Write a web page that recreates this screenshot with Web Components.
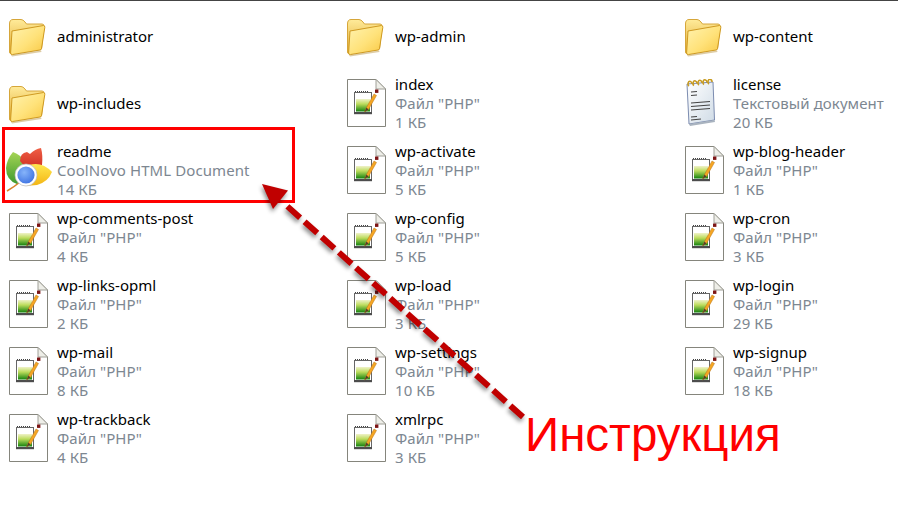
<!DOCTYPE html>
<html lang="ru">
<head>
<meta charset="utf-8">
<title>Инструкция</title>
<style>
    html, body { margin: 0; background: #fff; }
    body { width: 898px; height: 515px; overflow: hidden; position: relative; font-family: "Noto Sans", sans-serif; }
</style>
</head>
<body>
<file-grid>
    <file-tile icon="folder" name="administrator"></file-tile>
    <file-tile icon="folder" name="wp-admin"></file-tile>
    <file-tile icon="folder" name="wp-content"></file-tile>

    <file-tile icon="folder" name="wp-includes"></file-tile>
    <file-tile icon="php" name="index" type='Файл "PHP"' size="1 КБ"></file-tile>
    <file-tile icon="note" name="license" type="Текстовый документ" size="20 КБ"></file-tile>

    <file-tile icon="leaf" name="readme" type="CoolNovo HTML Document" size="14 КБ"></file-tile>
    <file-tile icon="php" name="wp-activate" type='Файл "PHP"' size="5 КБ"></file-tile>
    <file-tile icon="php" name="wp-blog-header" type='Файл "PHP"' size="1 КБ"></file-tile>

    <file-tile icon="php" name="wp-comments-post" type='Файл "PHP"' size="4 КБ"></file-tile>
    <file-tile icon="php" name="wp-config" type='Файл "PHP"' size="5 КБ"></file-tile>
    <file-tile icon="php" name="wp-cron" type='Файл "PHP"' size="3 КБ"></file-tile>

    <file-tile icon="php" name="wp-links-opml" type='Файл "PHP"' size="2 КБ"></file-tile>
    <file-tile icon="php" name="wp-load" type='Файл "PHP"' size="3 КБ"></file-tile>
    <file-tile icon="php" name="wp-login" type='Файл "PHP"' size="29 КБ"></file-tile>

    <file-tile icon="php" name="wp-mail" type='Файл "PHP"' size="8 КБ"></file-tile>
    <file-tile icon="php" name="wp-settings" type='Файл "PHP"' size="10 КБ"></file-tile>
    <file-tile icon="php" name="wp-signup" type='Файл "PHP"' size="18 КБ"></file-tile>

    <file-tile icon="php" name="wp-trackback" type='Файл "PHP"' size="4 КБ"></file-tile>
    <file-tile icon="php" name="xmlrpc" type='Файл "PHP"' size="3 КБ"></file-tile>
</file-grid>
<arrow-callout>Инструкция</arrow-callout>

<script>
const icons = {
    folder: `
        <svg width="48" height="48" viewBox="0 0 48 48">
            <defs>
                <linearGradient id="fb" x1="0" y1="0" x2="0" y2="1">
                    <stop offset="0" stop-color="#ffeb9a"/><stop offset="1" stop-color="#e0a92e"/>
                </linearGradient>
                <linearGradient id="ff" x1="0" y1="0" x2="1" y2="1">
                    <stop offset="0" stop-color="#fff3b0"/><stop offset=".55" stop-color="#ffe27a"/><stop offset="1" stop-color="#f8c843"/>
                </linearGradient>
            </defs>
            <path d="M4.5 12 Q4.5 7.5 8 7.5 L16 7.5 Q18 7.5 20 10 L21.5 12 L37 12 Q39 12 39 14 L36.5 37 L6 41.5 Q4.5 41.5 4.5 40 Z" fill="url(#fb)" stroke="#d6a63a"/>
            <path d="M7 19 L38.5 13.5 Q40 13.5 39.8 15.5 L36.5 36.5 Q36.3 37.8 35 38 L7.5 42.5 Q5.5 42.8 5.6 41 Z" fill="url(#ff)" stroke="#cf9a22"/>
            <path d="M6 43 L36 38.5 L36.5 40 L7 44.5 Z" fill="#a97f20" opacity=".4"/>
        </svg>`,
    php: `
        <svg width="48" height="48" viewBox="0 0 48 48">
            <defs>
                <linearGradient id="pg" x1="0" y1="0" x2="0" y2="1">
                    <stop offset="0" stop-color="#f0f2c8"/><stop offset=".4" stop-color="#bcdc5c"/><stop offset="1" stop-color="#14820e"/>
                </linearGradient>
            </defs>
            <path d="M4.5 .5 H33 L42.5 10 V47.5 H4.5 Z" fill="#fff" stroke="#85857c"/>
            <path d="M33 .5 V10 H42.5 Z" fill="#eeeee8" stroke="#a0a098"/>
            <rect x="11.5" y="13.5" width="17" height="20" fill="#fff" stroke="#666"/>
            <rect x="11" y="33" width="18" height="2.2" fill="#4d4d4d"/>
            <path d="M12 12.5 h13" stroke="#444" stroke-dasharray="1 1"/>
            <rect x="13" y="20" width="14" height="12.5" fill="url(#pg)"/>
            <path d="M21.5 33 L23.5 28.5 L31 15 L33.5 16.5 L25.5 30.5 Z" fill="#f5a623" stroke="#b9741a" stroke-width=".5"/>
            <rect x="32" y="10.5" width="3.4" height="3.4" fill="#7d1616"/>
            <path d="M21.5 33 L23.5 28.5 L25.5 30.5 Z" fill="#50402c"/>
        </svg>`,
    note: `
        <svg width="48" height="48" viewBox="0 0 48 48">
            <defs>
                <linearGradient id="ng" x1="0" y1="0" x2="1" y2="1">
                    <stop offset="0" stop-color="#fff"/><stop offset="1" stop-color="#cfdbe6"/>
                </linearGradient>
            </defs>
            <path d="M6 5 L32 3 L33.5 41 L8 45 Z" fill="url(#ng)" stroke="#7c8cb0"/>
            <path d="M8 45 L33.5 41 L34 43 L9 47 Z" fill="#a9b3bf"/>
            <g fill="none" stroke="#c79a20" stroke-width="1.6">
                <path d="M8 7 a2 2.5 0 1 1 3 -2"/><path d="M13 6.5 a2 2.5 0 1 1 3 -2"/><path d="M18 6 a2 2.5 0 1 1 3 -2"/><path d="M23 5.5 a2 2.5 0 1 1 3 -2"/><path d="M28 5 a2 2.5 0 1 1 3 -2"/>
            </g>
            <g stroke="#444" stroke-width="1.1">
                <path d="M10 13 L16 12.5 M10 16.5 L16 16 M10 24 L29 22.5 M10 27.5 L29 26 M10 31 L29 29.5 M10 38 L16 37.5 M10 41 L20 40"/>
            </g>
        </svg>`,
    leaf: `
        <svg width="48" height="48" viewBox="0 0 48 48">
            <defs>
                <linearGradient id="lg" x1="0" y1="0" x2="0" y2="1">
                    <stop offset="0" stop-color="#a5d455"/><stop offset="1" stop-color="#3f9a2e"/>
                </linearGradient>
                <linearGradient id="lr" x1="0" y1="0" x2="0" y2="1">
                    <stop offset="0" stop-color="#ef5f45"/><stop offset="1" stop-color="#cf2e22"/>
                </linearGradient>
                <linearGradient id="ly" x1="0" y1="0" x2="0" y2="1">
                    <stop offset="0" stop-color="#ffe84f"/><stop offset="1" stop-color="#f3b414"/>
                </linearGradient>
                <radialGradient id="lb" cx=".4" cy=".35" r=".75">
                    <stop offset="0" stop-color="#86b4fa"/><stop offset="1" stop-color="#3a6fe0"/>
                </radialGradient>
            </defs>
            <path d="M2 45 Q9 41 15 36" fill="none" stroke="#d9822b" stroke-width="1.6"/>
            <path d="M8 6 Q16 9 19 15 L20 25 L12 38 Q1 34 1 22 Q2 13 8 6 Z" fill="url(#lg)"/>
            <path d="M36 2 Q38 9 37 19 L22 23 L15 15 Q15 7 22 6 L25 8 Q30 3 36 2 Z" fill="url(#lr)"/>
            <path d="M24 19 Q37 15 47 26 Q43 36 32 39 L20 40 Z" fill="url(#ly)"/>
            <circle cx="21" cy="29" r="11" fill="#fff"/>
            <circle cx="21" cy="29" r="11" fill="none" stroke="#b9b9b9" stroke-width=".7"/>
            <circle cx="21" cy="29" r="8.6" fill="url(#lb)"/>
        </svg>`
}

const tileTemplate = document.createElement('template')
tileTemplate.innerHTML = `
    <style>
        :host {
            display: flex;
            align-items: center;
            gap: 4px;
            padding-left: 5px;
            font-family: "Noto Sans", sans-serif;
            font-size: 15px;
            line-height: 19px;
        }
        .icon { width: 48px; height: 48px; flex: none; margin-top: -1px; }
        svg { display: block; }
        .name { color: #000; }
        .meta { color: #7d8791; letter-spacing: .08px; }
        .meta:empty { display: none; }
    </style>
    <div class="icon"></div>
    <div>
        <div class="name"></div>
        <div class="meta type"></div>
        <div class="meta size"></div>
    </div>
`

class FileTile extends HTMLElement {
    constructor() {
        super()
        this.attachShadow({ mode: 'open' })
        this.shadowRoot.appendChild(tileTemplate.content.cloneNode(true))
    }

    connectedCallback() {
        const root = this.shadowRoot
        root.querySelector('.icon').innerHTML = icons[this.getAttribute('icon')]
        root.querySelector('.name').textContent = this.getAttribute('name')
        root.querySelector('.type').textContent = this.getAttribute('type') || ''
        root.querySelector('.size').textContent = this.getAttribute('size') || ''
    }
}

const gridTemplate = document.createElement('template')
gridTemplate.innerHTML = `
    <style>
        :host {
            display: grid;
            grid-template-columns: 338px 338px 222px;
            grid-auto-rows: 67px;
            border-top: 1px solid #444;
            padding-top: 2px;
        }
    </style>
    <slot></slot>
`

class FileGrid extends HTMLElement {
    constructor() {
        super()
        this.attachShadow({ mode: 'open' })
        this.shadowRoot.appendChild(gridTemplate.content.cloneNode(true))
    }
}

const calloutTemplate = document.createElement('template')
calloutTemplate.innerHTML = `
    <style>
        :host { display: block; position: absolute; inset: 0; pointer-events: none; }
        .frame {
            position: absolute;
            left: 2px;
            top: 127px;
            width: 287px;
            height: 70px;
            border: 3px solid #ff0000;
        }
        .label {
            position: absolute;
            left: 525px;
            top: 405px;
            font-family: "Liberation Sans", sans-serif;
            font-size: 47.5px;
            line-height: 60px;
            color: #ff0000;
        }
        svg { position: absolute; left: 0; top: 0; filter: drop-shadow(-1px 3px 2px rgba(0,0,0,.45)); }
    </style>
    <div class="frame"></div>
    <div class="label"><slot></slot></div>
    <svg width="898" height="515" viewBox="0 0 898 515">
        <path d="M523 417 L287 206" fill="none" stroke="#c00000" stroke-width="6" stroke-dasharray="17 6"/>
        <path d="M262 184 L288 190.5 L273 209 Z" fill="#c00000"/>
    </svg>
`

class ArrowCallout extends HTMLElement {
    constructor() {
        super()
        this.attachShadow({ mode: 'open' })
        this.shadowRoot.appendChild(calloutTemplate.content.cloneNode(true))
    }
}

window.customElements.define('file-tile', FileTile)
window.customElements.define('file-grid', FileGrid)
window.customElements.define('arrow-callout', ArrowCallout)
</script>
</body>
</html>
